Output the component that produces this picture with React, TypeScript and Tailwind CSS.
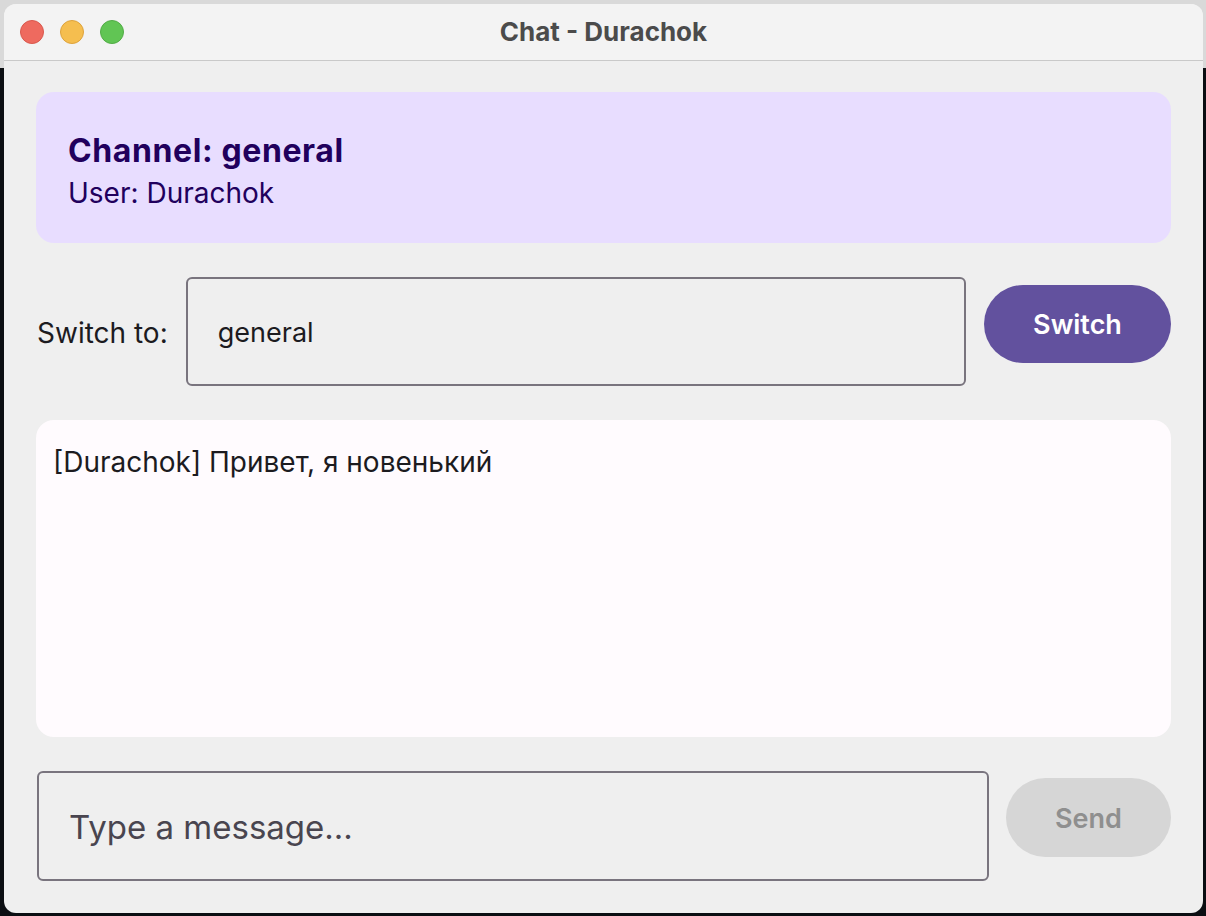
export default function App() {
  return (
    <div className="h-[916px] w-[1206px] overflow-hidden bg-[linear-gradient(to_bottom,#d9d9d9_68px,#0b0e12_68px)] p-[4px] pr-[3px] pb-[3px] font-['Inter',sans-serif]">
      <div className="flex h-full flex-col overflow-hidden rounded-[12px] bg-[#efefef]">
        {/* title bar */}
        <div className="relative flex h-[57px] shrink-0 items-center justify-center border-b border-[#c9c9c9] bg-[#f3f3f3] pb-[2px]">
          <div className="absolute left-[16px] top-[16px] flex gap-[16px]">
            <span className="h-[24px] w-[24px] rounded-full border border-[#d9584d] bg-[#ee6a5f]" />
            <span className="h-[24px] w-[24px] rounded-full border border-[#dea33c] bg-[#f5be4f]" />
            <span className="h-[24px] w-[24px] rounded-full border border-[#52ac46] bg-[#61c554]" />
          </div>
          <span className="text-[26px] font-bold text-[#4b4b4b]">Chat - Durachok</span>
        </div>

        <div className="flex flex-1 flex-col px-[32px] pt-[31px] pb-[33px]">
          {/* header card */}
          <div className="flex h-[151px] flex-col justify-center rounded-[18px] bg-[#e8ddff] px-[32px] pt-[6px] text-[#21005d]">
            <div className="text-[32px] font-bold leading-[40px] tracking-[0.6px]">Channel: general</div>
            <div className="mt-[4px] text-[28px] leading-[36px]">User: Durachok</div>
          </div>

          {/* switch row */}
          <div className="mt-[34px] flex items-start gap-[18px]">
            <span className="mt-[39px] pl-px text-[28px] leading-[34px] text-[#1c1b1f]">Switch to:</span>
            <div className="flex h-[109px] flex-1 items-center rounded-[6px] border-2 border-[#79747e] px-[30px] pt-[3px] text-[27px] text-[#1c1b1f]">
              general
            </div>
            <button className="mt-[8px] h-[78px] w-[187px] rounded-full bg-[#62519e] pt-[3px] text-[27px] font-semibold text-white">
              Switch
            </button>
          </div>

          {/* messages */}
          <div className="mt-[34px] h-[317px] rounded-[18px] bg-[#fffbfe] px-[17px] py-[25px]">
            <div className="text-[28px] leading-[34px] text-[#1c1b1f]">[Durachok] Привет, я новенький</div>
          </div>

          {/* compose row */}
          <div className="mt-[34px] flex items-start gap-[17px]">
            <div className="ml-px flex h-[110px] flex-1 items-center rounded-[6px] border-2 border-[#79747e] px-[30px] pt-[4px] text-[33px] text-[#49454f]">
              Type a message...
            </div>
            <button className="mt-[7px] h-[79px] w-[165px] rounded-full bg-[#d6d6d6] pt-[3px] text-[27px] font-semibold text-[#8f8f8f]">
              Send
            </button>
          </div>
        </div>
      </div>
    </div>
  );
}
